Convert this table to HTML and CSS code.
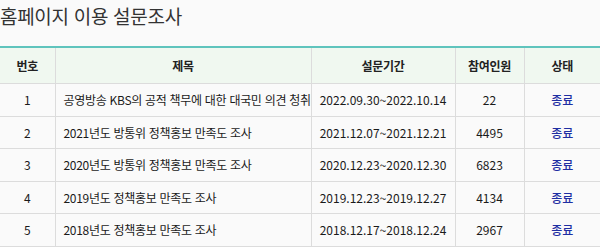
FILE: index.html
```html
<!DOCTYPE html>
<html lang="ko">
<head>
<meta charset="utf-8">
<link rel="stylesheet" href="styles.css">
</head>
<body>
<h1 class="title">홈페이지 이용 설문조사</h1>
<table class="survey">
  <colgroup>
    <col class="c-no"><col class="c-title"><col class="c-period"><col class="c-count"><col class="c-state">
  </colgroup>
  <thead>
    <tr><th>번호</th><th>제목</th><th>설문기간</th><th>참여인원</th><th>상태</th></tr>
  </thead>
  <tbody>
    <tr><td>1</td><td class="t"><div class="clip">공영방송 KBS의 공적 책무에 대한 대국민 의견 청취</div></td><td>2022.09.30~2022.10.14</td><td>22</td><td class="st">종료</td></tr>
    <tr><td>2</td><td class="t"><div class="clip">2021년도 방통위 정책홍보 만족도 조사</div></td><td>2021.12.07~2021.12.21</td><td>4495</td><td class="st">종료</td></tr>
    <tr><td>3</td><td class="t"><div class="clip">2020년도 방통위 정책홍보 만족도 조사</div></td><td>2020.12.23~2020.12.30</td><td>6823</td><td class="st">종료</td></tr>
    <tr><td>4</td><td class="t"><div class="clip">2019년도 정책홍보 만족도 조사</div></td><td>2019.12.23~2019.12.27</td><td>4134</td><td class="st">종료</td></tr>
    <tr><td>5</td><td class="t"><div class="clip">2018년도 정책홍보 만족도 조사</div></td><td>2018.12.17~2018.12.24</td><td>2967</td><td class="st">종료</td></tr>
  </tbody>
</table>
</body>
</html>
```
FILE: styles.css
```css
html, body {
  margin: 0;
  padding: 0;
  background: #fafafa;
}
body {
  font-family: "Noto Sans CJK KR", "Noto Sans", sans-serif;
  color: #1a1a1a;
  width: 600px;
  overflow: hidden;
}
.title {
  margin: 0;
  padding: 2px 0 0 0;
  height: 46px;
  box-sizing: border-box;
  font-size: 19px;
  font-weight: 400;
  line-height: 28px;
  color: #333;
  letter-spacing: -0.3px;
}
.survey {
  width: 600px;
  border-collapse: collapse;
  table-layout: fixed;
  border-top: 2px solid #5fc4bd;
}
.c-no { width: 55px; }
.c-title { width: 256px; }
.c-period { width: 144px; }
.c-count { width: 69px; }
.c-state { width: 76px; }
.survey th {
  background: #f0f8f0;
  height: 35px;
  padding: 0;
  font-size: 12px;
  font-weight: 700;
  color: #222;
  letter-spacing: -0.3px;
  border-left: 1px solid #dcdcdc;
  border-bottom: 1px solid #dcdcdc;
}
.survey td {
  height: 31.5px;
  padding: 0;
  font-size: 12px;
  text-align: center;
  border-left: 1px solid #dcdcdc;
  border-bottom: 1px solid #dcdcdc;
  white-space: nowrap;
  overflow: hidden;
}
.survey th:first-child, .survey td:first-child { border-left: none; }
.survey td.t { text-align: left; }
.clip {
  overflow: hidden;
  white-space: nowrap;
  padding-left: 8px;
  letter-spacing: -0.3px;
}
.survey td.st { color: #1f2fa3; font-weight: 500; }
```
